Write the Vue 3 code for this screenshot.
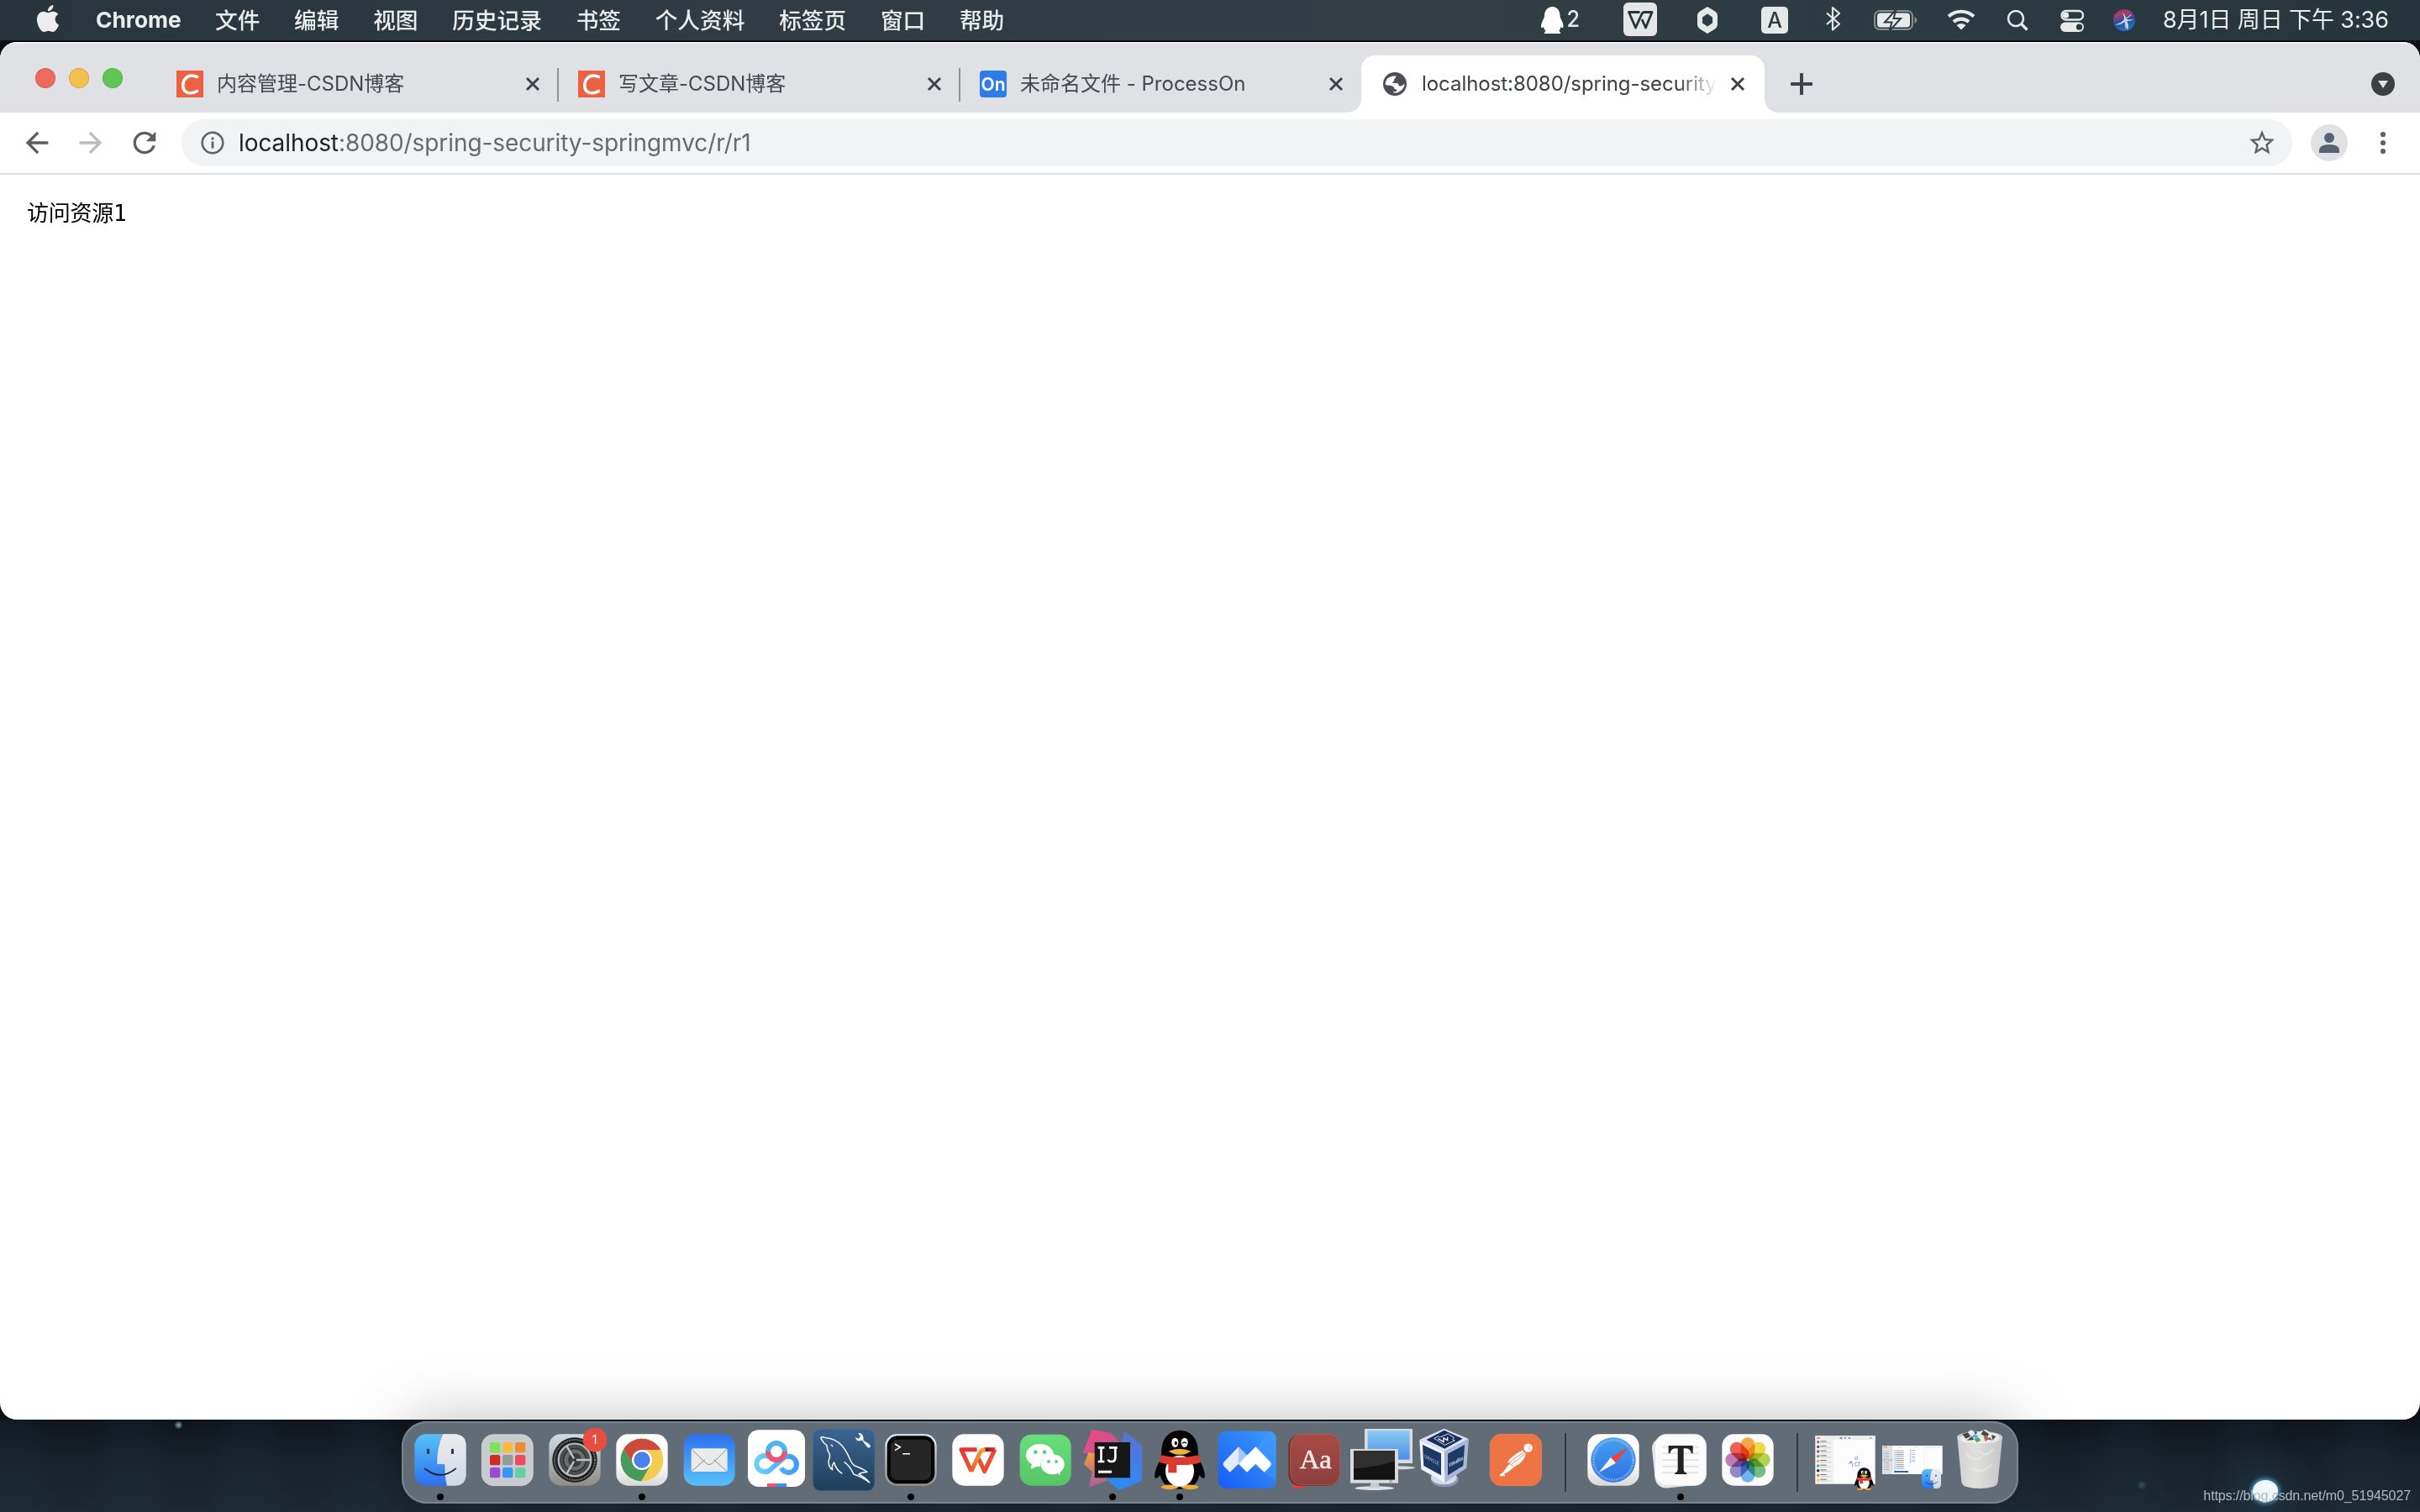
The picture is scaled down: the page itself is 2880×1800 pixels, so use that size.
<script setup>
const menus = ['文件', '编辑', '视图', '历史记录', '书签', '个人资料', '标签页', '窗口', '帮助']
const tabs = [
  { title: '内容管理-CSDN博客', icon: 'csdn' },
  { title: '写文章-CSDN博客', icon: 'csdn' },
  { title: '未命名文件 - ProcessOn', icon: 'on' },
  { title: 'localhost:8080/spring-security', icon: 'globe', active: true },
]
const launchpad = [
  ['#7fe05a', 339, 111], ['#f8bd3c', 384, 111], ['#ef8b34', 429, 111],
  ['#cf2a22', 339, 156], ['#94999c', 384, 156], ['#ef4b5e', 429, 156],
  ['#9a4bd0', 339, 201], ['#3897f5', 384, 201], ['#62cfa4', 429, 201],
]
const petals = ['#f79a2e', '#f3d22f', '#a9cc3b', '#5fb672', '#5aa9e6', '#8079c6', '#b56aa8', '#ee4b3e']
const chatRows = ['#777', '#555', '#b44', '#4aa', '#f5a623', '#2cb89a', '#224', '#c84', '#fb5']
</script>

<template>
  <div class="screen">
    <header class="menubar">
      <svg class="apple" viewBox="0 0 24 24" preserveAspectRatio="xMidYMid meet"><path fill="#ecedec" d="M12.152 6.896c-.948 0-2.415-1.078-3.96-1.04-2.04.027-3.91 1.183-4.961 3.014-2.117 3.675-.546 9.103 1.519 12.09 1.013 1.454 2.208 3.09 3.792 3.039 1.52-.065 2.09-.987 3.935-.987 1.831 0 2.35.987 3.96.948 1.637-.026 2.676-1.48 3.676-2.948 1.156-1.688 1.636-3.325 1.662-3.415-.039-.013-3.182-1.221-3.22-4.857-.026-3.04 2.48-4.494 2.597-4.559-1.429-2.09-3.623-2.324-4.39-2.376-2-.156-3.675 1.09-4.61 1.09zM15.53 3.83c.843-1.012 1.4-2.427 1.245-3.83-1.207.052-2.662.805-3.532 1.818-.78.896-1.454 2.338-1.273 3.714 1.338.104 2.715-.688 3.559-1.701" /></svg>
      <span class="app-name">Chrome</span>
      <nav class="menus"><span v-for="m in menus" :key="m">{{ m }}</span></nav>
      <div class="status">
        <svg class="st" viewBox="0 0 740 48">
          <path fill="#fff" d="M27.500 8c6 0 9 5 9 11 0 3 4 7 4 13-1 2-2 1-3 0-.5 3-2 4-2 5 2 1 2 3 1 3h-18c-1 0-1-2 1-3-.5-1-2-2-2.500-5-1 1-2 2-3 0 0-6 4-10 4-13 0-6 3.500-11 9.500-11z" />
          <text x="44.500" y="32" font-size="27" textLength="15.500" lengthAdjust="spacingAndGlyphs" fill="#e6e8e8">2</text>
          <rect x="112" y="3" width="40" height="40" rx="6" fill="#e4e7e6" />
          <path d="M131.500 14.500H118.500L126.500 33L133.500 17.500Q134.500 14.500 137 14.500H146L138.500 33L134 23" fill="none" stroke="#27343b" stroke-width="2.800" stroke-linejoin="round" />
          <path d="M212 8l9 5.500q3 2 3 5v11q0 3-3 5l-9 5.500-9-5.500q-3-2-3-5v-11q0-3 3-5zM212 16.500l-6 4v7l6 4 6-4v-7z" fill="#e6e8e8" fill-rule="evenodd" />
          <rect x="276" y="8" width="32" height="32" rx="5" fill="#e6e8e8" />
          <text x="292" y="33" font-size="25" text-anchor="middle" fill="#2d3a40">A</text>
          <path d="M354 15.500l15 13-8 7V9l8 7-15 13" fill="none" stroke="#e6e8e8" stroke-width="2.200" stroke-linejoin="round" />
          <rect x="411" y="13" width="45" height="22" rx="6" fill="none" stroke="#87918f" stroke-width="2" />
          <path d="M458.500 20q3 1.500 3 4t-3 4z" fill="#87918f" />
          <rect x="414" y="15.500" width="39" height="17" rx="4" fill="#e8eaea" />
          <path d="M436.500 11.500l-13.500 15h8.500l-3 10.500 13.500-15h-8.500z" fill="#e8eaea" stroke="#2c3b41" stroke-width="2" />
          <g fill="none" stroke="#e8eaea" stroke-width="4.200"><path d="M499 19.500a22.500 22.500 0 0 1 30 0" /><path d="M505 26a13.500 13.500 0 0 1 18 0" /></g>
          <path d="M508.500 30q5.500-4 11 0l-5.500 5.500z" fill="#e8eaea" />
          <circle cx="579" cy="22" r="9" fill="none" stroke="#e8eaea" stroke-width="2.500" /><path d="M585.500 28.500l7 7" stroke="#e8eaea" stroke-width="3.200" />
          <rect x="633.500" y="13" width="25.500" height="10.500" rx="5.250" fill="none" stroke="#e8eaea" stroke-width="2.400" /><circle cx="638.500" cy="18.200" r="3.600" fill="#e8eaea" />
          <rect x="632" y="26.500" width="28" height="11.500" rx="5.750" fill="#e8eaea" /><circle cx="654.500" cy="32.200" r="3.600" fill="#2b3a40" />
          <defs>
            <linearGradient id="siri" x1="0" y1="0" x2=".3" y2="1"><stop offset="0" stop-color="#73306d" /><stop offset=".3" stop-color="#b03a6a" /><stop offset=".6" stop-color="#2d4f9c" /><stop offset="1" stop-color="#2a6db8" /></linearGradient>
          </defs>
          <circle cx="708" cy="24" r="13" fill="url(#siri)" />
          <path d="M697 29.500q8-2 11-6.500 0-5-2-8 4 3 4 8 5 1 10-.5-5 3-9 2.500 3 4 1 11-2-6-3.500-10-5 4-11.500 3.500z" fill="#b4eef0" />
          <path d="M709 24l1 10M710 22.500l6-5" stroke="#f3a0cf" stroke-width="1.400" />
        </svg>
        <span class="clock">8月1日 周日 下午 3:36</span>
      </div>
    </header>

    <main class="window">
      <div class="tabstrip">
        <div class="lights"><i class="red" /><i class="yellow" /><i class="green" /></div>
        <div v-for="(t, i) in tabs" :key="i" class="tab" :class="{ active: t.active, divided: i < 2 }">
          <svg v-if="t.icon === 'csdn'" class="fav" viewBox="0 0 32 32"><rect width="32" height="32" fill="#ec6142" /><path d="M24.500 7.500Q13 3 8.500 13 6 22 11.500 25.500 17 28.500 24.500 24.500" fill="none" stroke="#fff" stroke-width="3.600" stroke-linecap="round" /></svg>
          <svg v-else-if="t.icon === 'on'" class="fav" viewBox="0 0 32 32"><rect width="32" height="32" rx="4" fill="#2f7ce8" /><text x="16" y="24" text-anchor="middle" font-size="22" font-weight="600" textLength="29" lengthAdjust="spacingAndGlyphs" fill="#fff">On</text></svg>
          <svg v-else class="fav" viewBox="0 0 32 32"><circle cx="16" cy="16" r="14" fill="#4d4f56" /><path d="M4.500 16.500Q5.500 7.500 14 6.500h3.500q0 2.500-2.500 3.500 1 2-1.500 3.500-.5 1.500 1 1.500h4q2 0 2 2t2 1.500q3 0 4-2.500 1.500 0 .8 2-2 6.500-9.300 8.500-4 .5-4-1.500h3q2-.5 1-2.500-3 0-3-2.500-1.500-2-5-2.500-3.500.5-5.500-1z" fill="#fff" /></svg>
          <span class="title">{{ t.title }}</span>
          <svg class="close" viewBox="0 0 18 18"><path d="M2 2l14 14M16 2L2 16" stroke="#3f4246" stroke-width="3" /></svg>
        </div>
        <svg class="plus" viewBox="0 0 26 26"><path d="M13 1.500v23M1.500 13h23" stroke="#3f4246" stroke-width="4" stroke-linecap="round" /></svg>
        <svg class="drop" viewBox="0 0 28 28"><circle cx="14" cy="14" r="14" fill="#3c4043" /><path d="M8 10h12l-6 9z" fill="#dfe1e5" /></svg>
      </div>

      <div class="toolbar">
        <svg class="nav" viewBox="0 0 24 24"><path fill="#5b5e63" d="M20 11H7.830l5.590-5.590L12 4l-8 8 8 8 1.410-1.410L7.830 13H20v-2z" /></svg>
        <svg class="nav" viewBox="0 0 24 24"><path fill="#babcbe" d="M12 4l-1.410 1.410L16.170 11H4v2h12.170l-5.580 5.590L12 20l8-8z" /></svg>
        <svg class="nav" viewBox="0 0 24 24"><path fill="#5b5e63" d="M17.650 6.350A7.958 7.958 0 0 0 12 4c-4.420 0-7.990 3.580-7.990 8s3.570 8 7.990 8c3.730 0 6.840-2.550 7.730-6h-2.080A5.990 5.990 0 0 1 12 18c-3.310 0-6-2.690-6-6s2.690-6 6-6c1.660 0 3.140.69 4.220 1.780L13 11h7V4l-2.350 2.350z" /></svg>
        <div class="omnibox">
          <svg class="info" viewBox="0 0 28 28"><circle cx="14" cy="14" r="12.300" fill="none" stroke="#5f6368" stroke-width="2.600" /><path d="M14 7.500v3M14 12.500v8" stroke="#5f6368" stroke-width="2.800" /></svg>
          <span class="url"><b>localhost</b>:8080/spring-security-springmvc/r/r1</span>
          <svg class="star" viewBox="0 0 24 24"><path fill="#5f6368" d="M22 9.240l-7.190-.62L12 2 9.190 8.630 2 9.240l5.460 4.730L5.820 21 12 17.270 18.180 21l-1.630-7.030L22 9.240zM12 15.400l-3.760 2.270 1-4.280-3.320-2.880 4.380-.38L12 6.100l1.710 4.040 4.380.38-3.320 2.880 1 4.280L12 15.400z" /></svg>
        </div>
        <svg class="avatar" viewBox="0 0 44 44"><circle cx="22" cy="22" r="22" fill="#dfe1e5" /><circle cx="22" cy="16" r="6" fill="#5a6172" /><path d="M10 34v-3q0-7 12-7t12 7v3z" fill="#5a6172" /></svg>
        <svg class="kebab" viewBox="0 0 8 28"><g fill="#5f6368"><circle cx="4" cy="4" r="3.100" /><circle cx="4" cy="14" r="3.100" /><circle cx="4" cy="24" r="3.100" /></g></svg>
      </div>
      <pre class="page">访问资源1</pre>
    </main>

    <footer class="desktop">
      <div class="dock">
        <svg class="defs" width="0" height="0">
          <defs>
            <linearGradient id="blue" x1="0" y1="0" x2="0" y2="1"><stop offset="0" stop-color="#56c3f8" /><stop offset="1" stop-color="#2c6ff0" /></linearGradient>
            <linearGradient id="mail" x1="0" y1="0" x2="0" y2="1"><stop offset="0" stop-color="#2e70ee" /><stop offset="1" stop-color="#57c1f9" /></linearGradient>
            <linearGradient id="pale" x1="0" y1="0" x2="0" y2="1"><stop offset="0" stop-color="#fff" /><stop offset=".6" stop-color="#fbfbfb" /><stop offset="1" stop-color="#d8d8d8" /></linearGradient>
            <linearGradient id="compass" x1="0" y1="0" x2="0" y2="1"><stop offset="0" stop-color="#45a0ee" /><stop offset="1" stop-color="#2f72e4" /></linearGradient>
            <linearGradient id="face" x1="0" y1="0" x2="0" y2="1"><stop offset="0" stop-color="#ececee" /><stop offset="1" stop-color="#cfd8e6" /></linearGradient>
            <linearGradient id="steel" x1="0" y1="0" x2="0" y2="1"><stop offset="0" stop-color="#cfdde3" /><stop offset="1" stop-color="#918c87" /></linearGradient>
            <linearGradient id="sql" x1="0" y1="0" x2="0" y2="1"><stop offset="0" stop-color="#3a6593" /><stop offset="1" stop-color="#213e59" /></linearGradient>
            <linearGradient id="ring" x1="0" y1="0" x2="0" y2="1"><stop offset="0" stop-color="#e2f3fa" /><stop offset="1" stop-color="#968f8a" /></linearGradient>
            <linearGradient id="wpsL" x1="0" y1="0" x2="0" y2="1"><stop offset="0" stop-color="#e8352e" /><stop offset="1" stop-color="#ee5a30" /></linearGradient>
            <linearGradient id="wpsM" gradientUnits="userSpaceOnUse" x1="858" y1="216" x2="892" y2="132"><stop offset="0" stop-color="#ee5a30" /><stop offset="1" stop-color="#f3a03c" /></linearGradient>
            <linearGradient id="wpsT" gradientUnits="userSpaceOnUse" x1="905" y1="137" x2="950" y2="137"><stop offset="0" stop-color="#74160f" /><stop offset=".8" stop-color="#e8352e" /></linearGradient>
            <linearGradient id="wechat" x1="0" y1="0" x2="0" y2="1"><stop offset="0" stop-color="#6ade7c" /><stop offset="1" stop-color="#56c566" /></linearGradient>
            <linearGradient id="meet" x1="0" y1="1" x2="1" y2="0"><stop offset="0" stop-color="#185cf6" /><stop offset="1" stop-color="#3c9bfa" /></linearGradient>
            <linearGradient id="dict" x1="0" y1="0" x2="0" y2="1"><stop offset="0" stop-color="#a94b48" /><stop offset="1" stop-color="#8b3f3e" /></linearGradient>
            <linearGradient id="ijA" x1="0" y1="0" x2="1" y2="1"><stop offset="0" stop-color="#f8487a" /><stop offset="1" stop-color="#b15a9e" /></linearGradient>
            <linearGradient id="ijB" x1="0" y1="0" x2="0" y2="1"><stop offset="0" stop-color="#f79a3b" /><stop offset="1" stop-color="#a55aa5" /></linearGradient>
            <linearGradient id="ijC" x1="0" y1="0" x2="0" y2="1"><stop offset="0" stop-color="#5f6fd0" /><stop offset="1" stop-color="#2b8bf7" /></linearGradient>
            <linearGradient id="sky" x1="0" y1="0" x2="0" y2="1"><stop offset="0" stop-color="#8ccbf2" /><stop offset="1" stop-color="#4d8fe6" /></linearGradient>
            <linearGradient id="bin" x1="0" y1="0" x2="1" y2="0"><stop offset="0" stop-color="#d4d4d3" /><stop offset=".4" stop-color="#e4e4e2" /><stop offset="1" stop-color="#c8c8c7" /></linearGradient>
            <linearGradient id="pan" x1="0" y1="0" x2="1" y2="0"><stop offset="0" stop-color="#6ad1f9" /><stop offset="1" stop-color="#3f9bf9" /></linearGradient>
            <symbol id="penguin" viewBox="312 66 182 216" overflow="visible">
              <path d="M402 68q66 4 66 84 0 10 8 30 14 24 16 50-2 18-20-4-10 50-70 50t-70-50q-18 22-20 4 2-26 16-50 8-20 8-30 0-80 66-84z" fill="#050505" />
              <ellipse cx="366" cy="271" rx="31" ry="8.500" fill="#f0ac37" /><ellipse cx="438" cy="271" rx="31" ry="8.500" fill="#f0ac37" />
              <ellipse cx="402" cy="214" rx="51" ry="56" fill="#fff" />
              <path d="M335 157q67 16 134 0l8 25q-26 12-86 10v28h-30v-30q-26-4-34-10z" fill="#dc3a2e" />
              <ellipse cx="385" cy="112" rx="12" ry="17" fill="#fff" /><ellipse cx="419" cy="112" rx="12" ry="17" fill="#fff" />
              <ellipse cx="388" cy="114" rx="5" ry="7" fill="#111" /><path d="M411 115q8-8 15 0" fill="none" stroke="#111" stroke-width="4" />
              <path d="M362 143q40-18 80 0-38 25-80 0z" fill="#efb13c" />
            </symbol>
            <symbol id="finder" viewBox="70 82 184 184" overflow="visible">
              <rect x="70" y="82" width="184" height="184" rx="42" fill="url(#blue)" />
              <path d="M171 82h41q42 0 42 42v100q0 42-42 42h-27q-6-20-7-46l-1-30h-27q-2-62 21-108z" fill="url(#face)" />
              <rect x="114" y="134" width="9" height="19" rx="3" fill="#26384a" /><rect x="201" y="134" width="9" height="19" rx="3" fill="#26384a" />
              <path d="M107 205q55 45 110 0" fill="none" stroke="#161d26" stroke-width="5" stroke-linecap="round" />
              <path d="M171 82q-23 46-21 108h27q0 46 8 76" fill="none" stroke="#2c5f9c" stroke-width="2" opacity=".45" />
            </symbol>
          </defs>
        </svg>

        <svg class="cell" viewBox="42 36 240 294"><use href="#finder" x="70" y="82" width="184" height="184" /><circle cx="162" cy="306" r="12" /></svg>

        <svg class="cell" viewBox="282 36 240 294">
          <rect x="310" y="83" width="183" height="183" rx="42" fill="#c9cccf" stroke="#dcdfe1" stroke-width="2" />
          <rect v-for="(s, i) in launchpad" :key="i" :x="s[1]" :y="s[2]" width="37" height="37" rx="8" :fill="s[0]" />
        </svg>

        <svg class="cell" viewBox="522 36 240 294">
          <rect x="550" y="82" width="184" height="184" rx="42" fill="url(#steel)" />
          <circle cx="642" cy="174" r="80" fill="#1b1c1d" />
          <circle cx="642" cy="174" r="72" fill="none" stroke="#8d8f91" stroke-width="6" stroke-dasharray="3 3.200" />
          <circle cx="642" cy="174" r="58" fill="#4b4c4d" stroke="#b4b6b8" stroke-width="7" />
          <circle cx="642" cy="174" r="40" fill="#6b6c6d" stroke="#2c2d2e" stroke-width="4" />
          <circle cx="642" cy="174" r="24" fill="#3b3c3d" />
          <path d="M642 174h58M642 174l-29-50M642 174l-29 50" stroke="#c2c4c6" stroke-width="7" />
          <circle cx="642" cy="174" r="6" fill="#333" />
          <circle cx="714" cy="102" r="43" fill="#e84d40" />
          <text x="713" y="117" text-anchor="middle" font-size="42" fill="#fff">1</text>
        </svg>

        <svg class="cell" viewBox="762 36 240 294">
          <rect x="790" y="82" width="184" height="184" rx="42" fill="url(#pale)" />
          <g transform="translate(882 174)">
            <circle r="76" fill="#f6cb52" />
            <path d="M-64.700-40A76 76 0 0 1 67-36H0L-31 18z" fill="#cb4a3c" />
            <path d="M-64.700-40A76 76 0 0 0-2.400 76L31 18 0 10-31 18z" fill="#469a5c" />
            <circle r="36" fill="#fff" /><circle r="29" fill="#4a80e8" />
          </g>
          <circle cx="882" cy="306" r="12" />
        </svg>

        <svg class="cell" viewBox="1002 36 240 294">
          <rect x="1031" y="82" width="183" height="184" rx="42" fill="url(#mail)" />
          <rect x="1058" y="133" width="129" height="83" rx="8" fill="#e9eaea" />
          <path d="M1061 213l46-40M1184 213l-46-40M1060 137l50 48q12 11 24 0l50-48" fill="none" stroke="#8f9294" stroke-width="3" />
        </svg>

        <svg class="cell" viewBox="42 36 240 294">
          <rect x="60" y="67" width="204" height="203" rx="38" fill="#fff" />
          <g fill="none" stroke-width="18">
            <path d="M137 164a29 29 0 1 0 4 44l42-37a29 29 0 1 1-4 32" stroke="url(#pan)" />
            <circle cx="162" cy="144" r="30" stroke="#4db4ec" /><path d="M132 144a30 30 0 0 0 60 0" stroke="#ee5570" />
          </g>
          <path d="M129 258h33v12h-33z" fill="#ee5570" /><path d="M162 258h36v12h-36z" fill="#3f8cf5" />
        </svg>

        <svg class="cell" viewBox="282 36 240 294">
          <rect x="292" y="64" width="221" height="220" rx="26" fill="url(#sql)" stroke="#47729c" stroke-width="2" />
          <path d="M320 98q-2-8 14-4 34 4 50 14 32 20 44 56 6 22 14 30 26 6 44 20-18 4-26 8 20 12 32 32-24-18-54-30-20-36-44-28-14 2-22-14-8 12-4 26-24-10-22-32 2-12 4-22-10-18-8-32-18-16-22-24z" fill="none" stroke="none" />
          <path d="M397 223q-24-16-29-40-10 10-6 26-16-10-13-34 6-14 2-24-10-14-8-28-14-10-22-26-2-9 17-2 34 2 58 28 16 18 30 52 6 14 16 20 28 10 44 22-22 2-30 8 24 12 38 30-22-18-56-30-14-30-34-44" fill="none" stroke="#f5f8fa" stroke-width="4.500" stroke-linejoin="round" />
          <path d="M356 121q5-2 6 6" stroke="#fff" stroke-width="4" fill="none" />
          <path d="M444 94q2 14 16 12l8-2 18 24q8 6 12-2 0-6-6-10l-20-12q4-20-12-26l-6 1 8 10-6 9z" fill="#eef4f8" />
        </svg>

        <svg class="cell" viewBox="522 36 240 294">
          <rect x="550" y="82" width="184" height="184" rx="42" fill="url(#ring)" />
          <rect x="557" y="88" width="170" height="171" rx="37" fill="#050505" />
          <rect x="570" y="101" width="144" height="145" rx="24" fill="#262626" />
          <path d="M585 117l19 11.500-19 11.500M613 152h26" fill="none" stroke="#fff" stroke-width="4.500" />
          <circle cx="642" cy="306" r="12" />
        </svg>

        <svg class="cell" viewBox="762 36 240 294">
          <rect x="790" y="82" width="184" height="184" rx="42" fill="#fff" />
          <g fill="none" stroke-width="15" stroke-linejoin="round">
            <path d="M942 137L905 215L884 170" stroke="#ec4c2f" />
            <path d="M878 137H822L858 215" stroke="url(#wpsL)" />
            <path d="M904 137H943" stroke="url(#wpsT)" />
            <path d="M858 215L886 153Q892 137 908 137" stroke="url(#wpsM)" />
          </g>
        </svg>

        <svg class="cell" viewBox="1002 36 240 294">
          <rect x="1031" y="83" width="183" height="183" rx="42" fill="url(#wechat)" />
          <path d="M1103 117c28 0 49 18 49 39h-3c-30 0-46 16-44 42h-14l-21 8 4-17c-14-8-21-18-21-32 0-22 22-40 50-40z" fill="#fff" />
          <ellipse cx="1148" cy="190" rx="42" ry="36" fill="#fff" /><path d="M1162 218l13 10-1-19z" fill="#fff" />
          <circle cx="1087" cy="146" r="7" fill="#60d171" /><circle cx="1119" cy="146" r="7" fill="#60d171" />
          <circle cx="1134" cy="180" r="6" fill="#60d171" /><circle cx="1161" cy="180" r="6" fill="#60d171" />
        </svg>

        <svg class="cell" viewBox="42 36 240 294">
          <path d="M88 67l68 10 44 48-100 30-44-6z" fill="url(#ijA)" />
          <path d="M98 150l-22-2-16 42 30 26-14 58 90-36z" fill="url(#ijB)" />
          <path d="M204 71l65 52-3 126-81 33-50-44 60-120z" fill="url(#ijC)" />
          <path d="M98 111h127v127H98z" fill="#171717" />
          <path d="M110 130h23M121.500 130v50M110 180h23M150 130h29M172 130v34q0 16-14 16-8 0-13-7" fill="none" stroke="#fff" stroke-width="8" />
          <path d="M111 212h48v9h-48z" fill="#fff" />
          <circle cx="162" cy="306" r="12" />
        </svg>

        <svg class="cell" viewBox="282 36 240 294"><use href="#penguin" x="312" y="66" width="182" height="216" /><circle cx="402" cy="306" r="12" /></svg>

        <svg class="cell" viewBox="522 36 240 294">
          <rect x="539" y="71" width="207" height="205" rx="28" fill="url(#meet)" />
          <path d="M746 99v149L640 176l84-105q22 4 22 28z" fill="#4aa3fb" opacity=".35" />
          <path d="M612 127v61l-31 30q-12-12-20-20-8-9 0-18z" fill="#e3ebfd" /><path d="M612 127l32 31-32 30z" fill="#a9c5fb" />
          <path d="M673 127l51 53q8 9 0 18l-20 20-31-30-31 30-30-30z" fill="#fff" />
        </svg>

        <svg class="cell" viewBox="762 36 240 294">
          <path d="M807 255h39v25l-20-7-19 7z" fill="#cd4639" />
          <rect x="790" y="84" width="182" height="182" rx="40" fill="#702d2c" />
          <rect x="797" y="82" width="177" height="181" rx="40" fill="url(#dict)" stroke="#b9605b" stroke-width="2" />
          <text x="887" y="203" text-anchor="middle" class="serif" font-size="97" textLength="114" lengthAdjust="spacingAndGlyphs" fill="#f5e9e6" stroke="#f5e9e6" stroke-width="1.500">Aa</text>
        </svg>

        <svg class="cell" viewBox="1002 36 240 294">
          <ellipse cx="1188" cy="202" rx="55" ry="6" fill="#d5d7d9" />
          <rect x="1062" y="63" width="171" height="123" fill="#d9dcde" /><rect x="1073" y="69" width="150" height="104" fill="url(#sky)" />
          <ellipse cx="1097" cy="275" rx="70" ry="7" fill="#dfe1e2" /><path d="M1085 255h26l5 18h-36z" fill="#c9cccd" />
          <rect x="1011" y="135" width="171" height="122" fill="#d8dadb" /><rect x="1023" y="141" width="147" height="104" fill="#131313" />
          <path d="M1023 141h147v36q-70 24-147 28z" fill="#3d3d3d" opacity=".7" />
          <circle cx="1155" cy="251" r="4" fill="none" stroke="#777" stroke-width="2" />
        </svg>

        <svg class="cell" viewBox="42 36 240 294">
          <ellipse cx="148" cy="244" rx="49" ry="27" fill="#8b95b5" /><ellipse cx="145" cy="237" rx="46" ry="25" fill="#d3daea" />
          <path d="M146 62l88 37-86 45-90-42z" fill="#dbe2f1" /><path d="M58 102l90 42v111l-84-47z" fill="#eef2fa" /><path d="M148 144l86-45-8 104-78 52z" fill="#a9b7d8" />
          <path d="M146 68l66 30-64 36-66-32z" fill="#182f5c" /><path d="M69 120l66 31v78l-62-34z" fill="#1d3a66" /><path d="M159 152l60-32-5 75-55 34z" fill="#1d3a66" />
          <path d="M110 97l16-8 4 4 30-12 22 14-6 6 8 4-36 16-10-6z" fill="none" stroke="#cfd9ea" stroke-width="3" /><path d="M124 98l20 12 0-14 14 8 0-12" fill="none" stroke="#fff" stroke-width="4" />
          <text transform="matrix(.88 .46 0 1 75 166)" font-size="17" fill="#b9c6dd" textLength="60" lengthAdjust="spacingAndGlyphs">ORACLE</text>
          <text transform="matrix(.88 -.46 0 1 163 200)" font-size="20" font-weight="700" fill="#d5deed" textLength="58" lengthAdjust="spacingAndGlyphs">VirtualBox</text>
        </svg>

        <svg class="cell" viewBox="282 36 240 294">
          <rect x="310" y="82" width="184" height="184" rx="40" fill="#ee7446" stroke="#f3875c" stroke-width="2" />
          <circle cx="446" cy="131" r="15.500" fill="#fff" /><path d="M457 122l-11 9 8 8" fill="none" stroke="#ee7446" stroke-width="2" />
          <path d="M424 140l14 10q-4 22-24 38l-20 12q-22 20-34 24l4 8h-20q2-10 12-12 14-24 26-34l-10-4q16-24 52-42z" fill="#fff" />
          <path d="M432 146q-26 16-56 40M436 150q-24 22-50 40M376 186l18 10" fill="none" stroke="#ee7446" stroke-width="2.500" />
        </svg>

        <i class="sep" />

        <svg class="cell" viewBox="630 36 240 294">
          <rect x="658" y="82" width="184" height="184" rx="42" fill="url(#pale)" />
          <circle cx="750" cy="174" r="80" fill="url(#compass)" /><circle cx="750" cy="174" r="71" fill="none" stroke="#d4e9fb" stroke-width="9" stroke-dasharray="2 4.200" opacity=".8" />
          <path d="M805 128l-46 57-18-20z" fill="#e2463c" /><path d="M697 220l44-55 18 20z" fill="#f1f2f3" />
        </svg>

        <svg class="cell" viewBox="870 36 240 294">
          <rect x="893" y="88" width="178" height="182" rx="40" fill="#e4e4e4" transform="rotate(-6 982 178)" />
          <rect x="898" y="82" width="184" height="184" rx="42" fill="#fbfbfb" stroke="#dcdcdc" stroke-width="2" />
          <path d="M925 128h130M925 151h130M925 174h130M925 197h130M925 220h130" stroke="#e4e4e4" stroke-width="6" />
          <path d="M947 123h87v28h-5q-4-18-18-18h-10v74q0 12 11 14v4h-43v-4q11-2 11-14v-74h-10q-14 0-18 18h-5z" fill="#222" />
          <circle cx="990" cy="306" r="12" />
        </svg>

        <svg class="cell" viewBox="-60 36 240 294">
          <rect x="-32" y="82" width="184" height="184" rx="42" fill="#fcfcfc" />
          <g class="petals"><rect v-for="(c, i) in petals" :key="i" x="35" y="94" width="50" height="78" rx="25" :fill="c" :transform="`rotate(${i * 45} 60 174)`" /></g>
        </svg>

        <i class="sep" />

        <svg class="cell" viewBox="288 36 240 294">
          <rect x="301" y="88" width="214" height="172" fill="#fcfcfd" /><rect x="301" y="88" width="214" height="14" fill="#eceded" /><rect x="305" y="102" width="61" height="156" fill="#f1f1f1" />
          <g v-for="(c, i) in chatRows" :key="i"><circle cx="311" :cy="110 + i * 17" r="5" :fill="c" /><rect x="319" :y="106 + i * 17" width="22" height="3" fill="#777" /><rect x="319" :y="112 + i * 17" width="38" height="2" fill="#c2c2c2" /></g>
          <path d="M306 96h12" stroke="#e5695d" stroke-width="4" /><circle cx="393" cy="96" r="4" fill="#4a8fe0" /><circle cx="408" cy="96" r="3" fill="#777" /><circle cx="423" cy="96" r="3" fill="#777" /><circle cx="499" cy="96" r="3" fill="#6c6" />
          <path d="M418 186h16v14M442 166l10-4v10h-9zM443 184l16-2-2 12-14 1z" fill="none" stroke="#98a5e4" stroke-width="3" /><path d="M424 181h8" stroke="#e0556c" stroke-width="4" />
          <use href="#penguin" x="440" y="201" width="71" height="81" />
        </svg>

        <svg class="cell" viewBox="528 36 240 294">
          <rect x="540" y="123" width="215" height="102" fill="#fdfdfd" /><rect x="540" y="123" width="38" height="102" fill="#dedfe2" />
          <path d="M544 128h14" stroke="#df7b58" stroke-width="3" /><path d="M598 129h14M658 129h10M694 129h50" stroke="#aaa" stroke-width="2" stroke-dasharray="6 5" />
          <path d="M558 143v68" stroke="#9a9ca2" stroke-width="12" stroke-dasharray="2 6" /><path d="M548 143v68" stroke="#8db4e6" stroke-width="4" stroke-dasharray="3 5" /><path d="M541 175h36" stroke="#c4c5c9" stroke-width="7" />
          <path d="M603 140v70" stroke="#888" stroke-width="28" stroke-dasharray="2.500 4.500" /><path d="M585 138v74M641 138v46" stroke="#5fb5f0" stroke-width="4" stroke-dasharray="4 4" /><path d="M652 138v46" stroke="#999" stroke-width="12" stroke-dasharray="2 6" />
          <rect x="582" y="213" width="51" height="6" fill="#2361d8" /><path d="M582 138v84M636 138v84M692 138v84" stroke="#e3e3e3" stroke-width="1.500" />
          <use href="#finder" x="681" y="207" width="69" height="69" />
        </svg>

        <svg class="cell" viewBox="768 36 240 294">
          <ellipse cx="888" cy="92" rx="81" ry="20" fill="#c7c8c8" />
          <path d="M815 95l22-14 20-14 18 8 14-2 20-8 18 12 24 4 10 14-20 18H835z" fill="#e9e9e8" />
          <path d="M826 82l20-6 10 14-18 8zM868 72l12 4-8 8zM842 104l18-14 8 12zM892 82l10-14 20 14-10 10zM930 84l16 6-12 14z" fill="#4a4744" /><path d="M858 90l14-8 12 8-10 8z" fill="#43bde0" /><path d="M868 100l16-6 8 10-14 8z" fill="#5aa65b" /><path d="M902 90l14-4 4 14-12 8z" fill="#c5663a" /><path d="M914 100l12-6 6 10z" fill="#42599a" />
          <path d="M808 94q14 20 80 20t81-20l-16 158q-2 12-14 17-51 14-102 0-12-5-14-17z" fill="url(#bin)" opacity=".97" />
          <path d="M840 150q30 40 60 10M850 200q40 30 80-10M880 140q30 30 56-4" fill="none" stroke="#f0f0ef" stroke-width="7" opacity=".5" />
          <path d="M808 93q10 20 80 20t81-20" fill="none" stroke="#f0f0f0" stroke-width="3" />
        </svg>
      </div>
      <i class="star1" /><i class="star2" /><i class="moon" />
      <span class="watermark">https://blog.csdn.net/m0_51945027</span>
    </footer>
  </div>
</template>

<style>
body { margin: 0; background: #10161c; }
</style>

<style scoped>
.screen {
  position: relative;
  width: 2880px;
  height: 1800px;
  overflow: hidden;
  display: flex;
  flex-direction: column;
  background: #0c1116;
  font-family: Inter, "Noto Sans CJK SC", sans-serif;
}
svg { display: block; flex: none; }
.menubar {
  height: 48px;
  flex: none;
  display: flex;
  align-items: center;
  box-sizing: border-box;
  background: linear-gradient(90deg, #28353c, #303b44 30%, #313e44 60%, #2b3b41 80%, #26353b);
  color: #ebedec;
  font-size: 26.700px;
  font-weight: 500;
  line-height: 48px;
  white-space: nowrap;
}
.apple { width: 32px; height: 32px; margin: -4px 0 0 41px; }
.app-name { margin-left: 41px; width: 142px; font-weight: 700; font-size: 26.300px; }
.menus { display: flex; gap: 40.700px; }
.status { margin-left: auto; display: flex; align-items: center; width: 1060px; }
.st { width: 740px; height: 48px; }
.clock { margin-left: 14px; font-size: 27px; letter-spacing: -0.1px; font-weight: 400; }
.window {
  height: 1640px;
  margin-top: 2px;
  flex: none;
  border-radius: 20px;
  overflow: hidden;
  background: #fff;
  display: flex;
  flex-direction: column;
  box-shadow: 0 0 0 1px #000;
}
.tabstrip { height: 84px; flex: none; display: flex; align-items: flex-end; background: #dfe1e5; box-shadow: inset 0 2px 0 #f3f4f5; }
.lights { width: 186px; height: 84px; flex: none; display: flex; align-items: center; gap: 16px; box-sizing: border-box; padding: 2px 0 0 42px; }
.lights i { width: 24px; height: 24px; border-radius: 50%; box-sizing: border-box; border: 1px solid rgba(0, 0, 0, .12); }
.red { background: #ed6a5e; }
.yellow { background: #f5bf4f; }
.green { background: #61c554; }
.tab { position: relative; width: 478px; height: 68px; flex: none; display: flex; align-items: center; box-sizing: border-box; padding: 0 22px 0 24px; color: #45484c; font-size: 24px; }
.divided::after { content: ""; position: absolute; right: -1px; top: 15px; width: 2px; height: 40px; background: #8f9296; }
.active { width: 480px; background: #fff; border-radius: 16px 16px 0 0; color: #3c4043; }
.active::before, .active::after { content: ""; position: absolute; bottom: 0; width: 16px; height: 16px; }
.active::before { left: -16px; background: radial-gradient(circle at 0 0, transparent 15.500px, #fff 16px); }
.active::after { right: -16px; background: radial-gradient(circle at 100% 0, transparent 15.500px, #fff 16px); }
.fav { width: 32px; height: 32px; }
.title { flex: none; width: 350px; margin-left: 16px; white-space: nowrap; line-height: 40px; }
.active .title { letter-spacing: -0.05px; -webkit-mask-image: linear-gradient(90deg, #000 305px, transparent 352px); mask-image: linear-gradient(90deg, #000 305px, transparent 352px); }
.close { width: 18px; height: 18px; margin-left: 17px; }
.plus { width: 26px; height: 26px; margin: 0 0 21px 31px; }
.drop { width: 28px; height: 28px; margin: 0 30px 20px auto; }
.toolbar { height: 74px; flex: none; box-sizing: border-box; border-bottom: 2px solid #dcdde2; display: flex; align-items: center; padding: 0 40px 0 24px; }
.nav { width: 40px; height: 40px; margin-right: 24px; }
.omnibox { width: 2512px; height: 56px; flex: none; box-sizing: border-box; border-radius: 28px; background: #f1f3f4; display: flex; align-items: center; padding: 0 18px 0 23px; }
.info { width: 28px; height: 28px; }
.url { margin-left: 17px; flex: 1; font-size: 28px; letter-spacing: -0.08px; color: #666a6e; white-space: nowrap; }
.url b { font-weight: 400; color: #202124; }
.star { width: 36px; height: 36px; }
.avatar { width: 44px; height: 44px; margin-left: 22px; }
.kebab { width: 8px; height: 28px; margin-left: auto; }
.page { margin: 29px 0 0 32px; font: 26px/34px "DejaVu Sans Mono", "Noto Sans CJK SC", monospace; letter-spacing: -0.25px; color: #000; }
.desktop {
  position: relative;
  height: 110px;
  flex: none;
  display: flex;
  justify-content: center;
  background: repeating-linear-gradient(90deg, rgba(40, 65, 85, .12) 0 30px, transparent 60px 110px, rgba(40, 65, 85, .12) 140px), linear-gradient(#0f141a, #16212a 40%, #1c2932);
}
.dock {
  position: relative;
  width: 1924px;
  height: 98px;
  margin-top: 2px;
  box-sizing: border-box;
  padding: 0 6px;
  display: flex;
  border-radius: 30px;
  background: #616c77;
  box-shadow: inset 0 0 0 2px #78838c, 0 0 76px rgba(0, 0, 0, .26);
}
.defs { position: absolute; }
.cell { width: 80px; height: 98px; overflow: visible; }
.sep { width: 2px; height: 70px; margin: 14px 16px 0 18px; background: #2d3842; flex: none; }
.petals { isolation: isolate; }
.petals rect { mix-blend-mode: multiply; opacity: .88; }
.serif { font-family: "Liberation Serif", serif; }
.star1, .star2, .moon { position: absolute; border-radius: 50%; }
.star1 { left: 208px; top: 2px; width: 9px; height: 9px; background: radial-gradient(#7ea3ab, #1c3038 75%); }
.star2 { left: 2545px; top: 74px; width: 8px; height: 8px; background: #2d4555; filter: blur(1px); }
.moon { left: 2681px; top: 72px; width: 30px; height: 26px; background: #f1f6f8; box-shadow: 0 0 5px 2px #4e9fc9, 0 0 45px 14px rgba(45, 80, 110, .35); }
.watermark { position: absolute; right: 11px; bottom: 9px; font: 16px/20px "Liberation Sans", sans-serif; letter-spacing: -0.1px; color: #b3b8ba; }
</style>
